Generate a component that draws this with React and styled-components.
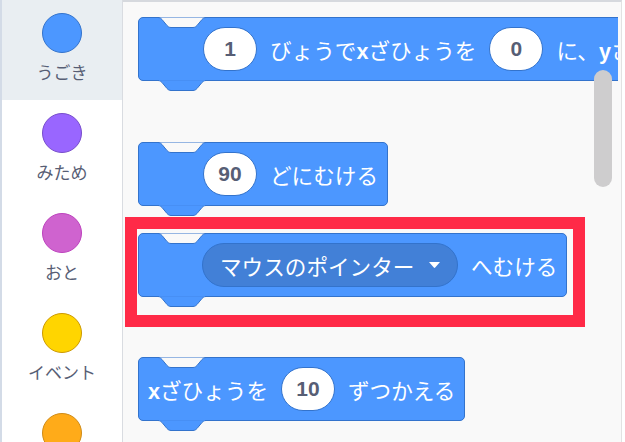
import React from "react";
import styled, { createGlobalStyle } from "styled-components";

const Global = createGlobalStyle`
  html, body { margin: 0; padding: 0; background: #ffffff; }
  body { font-family: "Liberation Sans", "Noto Sans CJK JP", sans-serif; }
`;

const Page = styled.div`
  display: flex;
  width: 625px;
  height: 442px;
  overflow: hidden;
  background: #ffffff;
`;

const Sidebar = styled.nav`
  width: 120px;
  flex: none;
  border-left: 2px solid #d3dbe7;
  border-right: 1px solid #d9dce1;
  background: #ffffff;
  display: flex;
  flex-direction: column;
  overflow: hidden;
`;

const Category = styled.div`
  height: 100px;
  flex: none;
  display: flex;
  flex-direction: column;
  align-items: center;
  padding-top: 13px;
  box-sizing: border-box;
  gap: 8px;
  background: ${(p) => (p.$active ? "#e9eef2" : "transparent")};
`;

const Dot = styled.span`
  width: 40px;
  height: 40px;
  border-radius: 50%;
  box-sizing: border-box;
  background: ${(p) => p.$fill};
  border: 1px solid ${(p) => p.$edge};
`;

const CatLabel = styled.span`
  font-family: "Noto Sans CJK JP", sans-serif;
  font-size: 17px;
  line-height: 22px;
  color: #575e75;
`;

const Workspace = styled.main`
  flex: none;
  width: 498px;
  position: relative;
  display: flex;
  background: #f9f9f9;
  border-top: 2px solid #d6d9de;
  border-right: 1px solid #e2e2e2;
`;

const Canvas = styled.div`
  flex: 1;
  margin-right: 3px;
  overflow: hidden;
  display: flex;
  flex-direction: column;
  align-items: flex-start;
  padding-left: 15px;
`;

const BlockBody = styled.div`
  position: relative;
  flex: none;
  box-sizing: border-box;
  width: ${(p) => p.$w}px;
  height: 64px;
  margin-top: ${(p) => p.$mt || 0}px;
  padding-left: ${(p) => p.$pl}px;
  background: #4c97ff;
  border: 1px solid #3373cc;
  border-radius: 5px;
  display: flex;
  align-items: center;
  gap: 13px;
  color: #ffffff;
  font-size: 21.6px;
  white-space: nowrap;
`;

const Notch = styled.svg`
  position: absolute;
  left: 19px;
  top: -1px;
  width: 48px;
  height: 12px;
  overflow: visible;
`;

const Tab = styled.svg`
  position: absolute;
  left: 19px;
  bottom: -12px;
  width: 48px;
  height: 12px;
  overflow: visible;
`;

const Words = styled.span`
  font-family: "Noto Sans CJK JP", sans-serif;
  font-weight: 400;
  b {
    font-family: "Liberation Sans", sans-serif;
    font-weight: 700;
  }
`;

const Oval = styled.span`
  flex: none;
  box-sizing: border-box;
  width: 54px;
  height: 44px;
  border-radius: 22px;
  background: #ffffff;
  border: 1px solid #3373cc;
  display: flex;
  align-items: center;
  justify-content: center;
  color: #575e75;
  font-family: "Liberation Sans", sans-serif;
  font-weight: 700;
  font-size: 21px;
`;

const Dropdown = styled.span`
  flex: none;
  box-sizing: border-box;
  width: 256px;
  height: 44px;
  border-radius: 22px;
  background: #4280d7;
  border: 1px solid #3373cc;
  display: flex;
  align-items: center;
  padding-left: 17px;
  gap: 14px;
  font-family: "Noto Sans CJK JP", sans-serif;
  color: #ffffff;
`;

const Highlight = styled.div`
  flex: none;
  box-sizing: border-box;
  width: 460px;
  margin-left: -13px;
  margin-top: ${(p) => p.$mt}px;
  border: 12px solid #ff2a47;
  padding: 4px 6px 18px 1px;
`;

const Scrollbar = styled.div`
  position: absolute;
  left: 471px;
  top: 68px;
  width: 18px;
  height: 117px;
  border-radius: 9px;
  background: #cecdce;
`;

const notchPath = "M0 0.5 C2 0.5 3 1.5 4 2.5 L9 8.5 C10 9.5 11 10.5 13 10.5 H35 C37 10.5 38 9.5 39 8.5 L44 2.5 C45 1.5 46 0.5 48 0.5";

function Block({ w, pl, mt, children }) {
  return (
    <BlockBody $w={w} $pl={pl} $mt={mt}>
      <Notch viewBox="0 0 48 12">
        <path d={notchPath} fill="#f9f9f9" stroke="#3373cc" strokeWidth="1" />
      </Notch>
      {children}
      <Tab viewBox="0 0 48 12">
        <path d={notchPath} fill="#4c97ff" stroke="#3373cc" strokeWidth="1" />
        <rect x="1" y="-1" width="46" height="1.6" fill="#4c97ff" />
      </Tab>
    </BlockBody>
  );
}

const categories = [
  { label: "うごき", fill: "#4c97ff", edge: "#3373cc", active: true },
  { label: "みため", fill: "#9966ff", edge: "#774dcb" },
  { label: "おと", fill: "#cf63cf", edge: "#bd42bd" },
  { label: "イベント", fill: "#ffd500", edge: "#cc9900" },
  { label: "せいぎょ", fill: "#ffab19", edge: "#cf8b17" },
];

export default function App() {
  return (
    <>
      <Global />
      <Page>
        <Sidebar>
          {categories.map((c) => (
            <Category key={c.label} $active={c.active}>
              <Dot $fill={c.fill} $edge={c.edge} />
              <CatLabel>{c.label}</CatLabel>
            </Category>
          ))}
        </Sidebar>
        <Workspace>
          <Canvas>
            <Block w={760} pl={64} mt={15}>
              <Oval>1</Oval>
              <Words>
                びょうで<b>x</b>ざひょうを
              </Words>
              <Oval>0</Oval>
              <Words>
                に、<b>y</b>ざひょうを
              </Words>
              <Oval>0</Oval>
            </Block>
            <Block w={250} pl={64} mt={61}>
              <Oval>90</Oval>
              <Words>どにむける</Words>
            </Block>
            <Highlight $mt={11}>
              <Block w={429} pl={63}>
                <Dropdown>
                  マウスのポインター
                  <svg width="13" height="8" viewBox="0 0 13 8">
                    <path d="M1 1 H12 L7.2 6.6 C6.8 7.1 6.2 7.1 5.8 6.6 Z" fill="#ffffff" />
                  </svg>
                </Dropdown>
                <Words>へむける</Words>
              </Block>
            </Highlight>
            <Block w={327} pl={9} mt={30}>
              <Words>
                <b>x</b>ざひょうを
              </Words>
              <Oval>10</Oval>
              <Words>ずつかえる</Words>
            </Block>
          </Canvas>
          <Scrollbar />
        </Workspace>
      </Page>
    </>
  );
}
